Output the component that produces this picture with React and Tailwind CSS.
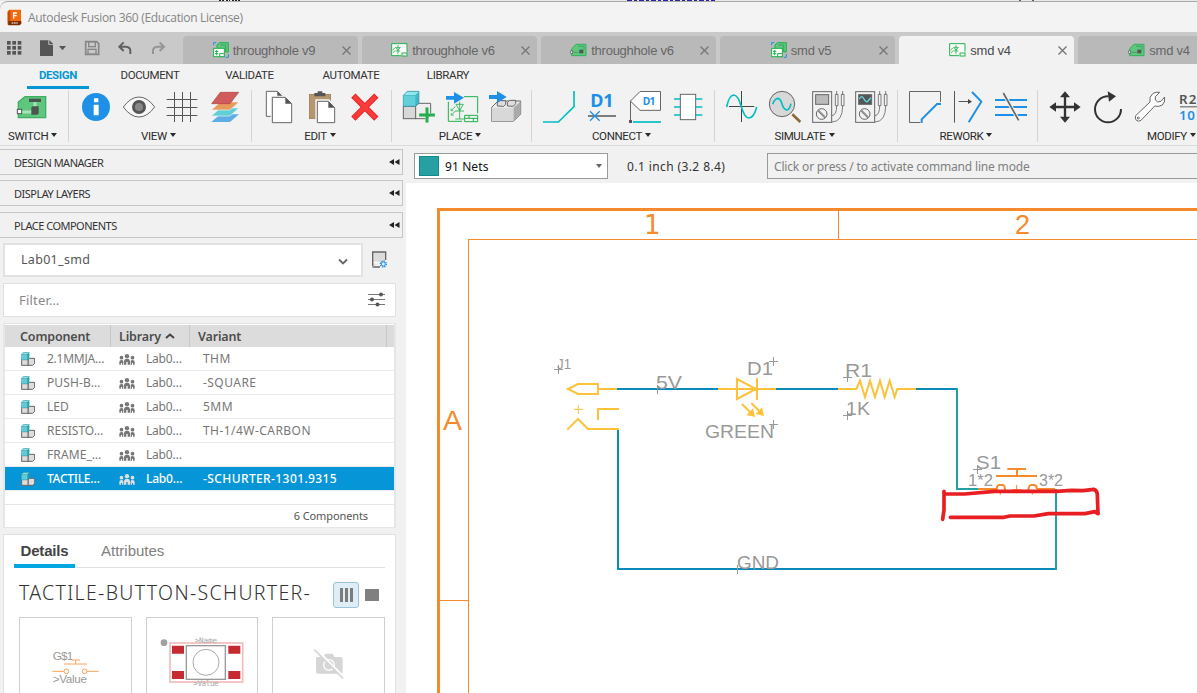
import React from "react";

const GREEN = "#22b14c";
const TEAL = "#00bfc4";
const BLUE = "#1e90e8";
const GREY = "#666";

/* Drawing surface: three drawing units to a pixel. */
function Ic({ x, y, w = 43, h = 36, className = "", children }) {
  return (
    <svg
      width={w}
      height={h}
      viewBox={`${x} ${y} ${w * 3} ${h * 3}`}
      fill="none"
      className={"shrink-0 " + className}
    >
      {children}
    </svg>
  );
}

function Caret({ className = "" }) {
  return (
    <svg width="6" height="4" viewBox="0 0 6 4" className={"shrink-0 " + className}>
      <path d="M0 0H6L3 4Z" fill="currentColor" />
    </svg>
  );
}

/* ---------- document tab icons ---------- */
function BoardIcon() {
  return (
    <svg width="17" height="14" viewBox="0 0 51 42" fill="none" className="shrink-0">
      <path d="M5 38V17L18 4H48V38Z" fill="#5cc77d" stroke="#35b05c" strokeWidth="3" />
      <path d="M8 28H27M24 10H42V20" stroke="#3f8f5a" strokeWidth="2" />
      <rect x="28" y="20" width="12" height="11" fill="#555" />
      <rect x="2" y="24" width="6" height="7" fill="#fff" stroke="#555" strokeWidth="2" />
    </svg>
  );
}
function SchematicIcon() {
  return (
    <svg width="17" height="14" viewBox="0 0 51 42" fill="none" className="shrink-0">
      <path d="M30 38H2V2H48V26" fill="#fff" stroke={GREEN} strokeWidth="3" />
      <path d="M21 6V34M13 13H28L21 22ZM13 24H28M5 22L11 15M6 30L12 23" stroke={GREEN} strokeWidth="2.5" />
      <rect x="33" y="30" width="15" height="9" fill="#fff" stroke={GREEN} strokeWidth="3" />
    </svg>
  );
}
function ProjectIcon() {
  return (
    <svg width="16" height="16" viewBox="0 0 48 48" fill="none" className="shrink-0">
      <path d="M2 10V2H10M38 46H46V36" stroke={BLUE} strokeWidth="3" />
      <path d="M12 20V9L19 2H46V30H38V20Z" fill="#5cc77d" stroke={GREEN} strokeWidth="3" />
      <path d="M22 9H38V18" stroke="#3f9f6a" strokeWidth="3" />
      <rect x="2" y="19" width="32" height="25" fill="#fff" stroke={GREEN} strokeWidth="3" />
      <path d="M11 24V40M6 28H16M6 35H16" stroke={GREEN} strokeWidth="3" />
      <rect x="20" y="35" width="14" height="9" fill="#fff" stroke={GREEN} strokeWidth="3" />
    </svg>
  );
}

const tabs = [
  { t: "throughhole v9", icon: <ProjectIcon /> },
  { t: "throughhole v6", icon: <SchematicIcon /> },
  { t: "throughhole v6", icon: <BoardIcon /> },
  { t: "smd v5", icon: <ProjectIcon /> },
  { t: "smd v4", icon: <SchematicIcon />, active: true },
  { t: "smd v4", icon: <BoardIcon /> },
];

function TitleBar() {
  return (
    <div className="h-8 shrink-0 bg-[#f3f3f3] flex flex-col overflow-hidden">
      <div className="h-px shrink-0 flex overflow-hidden bg-[#e9e9e9]">
        <svg width="1197" height="1" viewBox="0 0 1197 1">
          <path d="M219 0h5M226 0h4M232 0h8" stroke="#222" strokeWidth="2" strokeDasharray="2 1" />
          <path d="M627 0h88" stroke="#2a1fae" strokeWidth="2" strokeDasharray="5 2 3 2" />
          <path d="M1020 0v2M1033 0v2" stroke="#222" strokeWidth="1.4" />
        </svg>
      </div>
      <div className="grow border-t border-[#a9a9a9] rounded-tl-lg flex items-center pl-[7px]">
        <svg width="15" height="17" viewBox="0 0 45 51" className="shrink-0">
          <path d="M6 2H42V42L36 48H2V8Z" fill="#f56a0a" />
          <path d="M2 8L10 2V36L2 44Z" fill="#c94a00" />
          <path d="M4 36H43V44L38 49H4Z" fill="#7a2d00" />
          <path d="M18 10H30V14H22V18H29V22H22V29H18Z" fill="#fff" />
          <path d="M14 42H32" stroke="#e8c8b0" strokeWidth="4" strokeDasharray="5 2" />
        </svg>
        <span className="ml-[6px] pt-[2px] font-['Open_Sans',sans-serif] text-[12px] tracking-[-0.31px] text-[#858585] whitespace-nowrap">
          Autodesk Fusion 360 (Education License)
        </span>
      </div>
    </div>
  );
}

function TabBar() {
  return (
    <div className="h-8 shrink-0 bg-[#c9c9c9] flex items-end overflow-hidden">
      <div className="w-[183px] shrink-0 h-8 flex">
        <Ic x={0} y={96} w={183} h={32}>
          <g fill="#555">
            {[21, 37, 53].map((x) => [123, 138, 153].map((y) => <rect key={x + "-" + y} x={x} y={y} width="11" height="11" />))}
            <path d="M120 121H145V134H159V168H120Z" />
            <path d="M148 120L160 132H148Z" />
            <path d="M177 138H198L187.500 151Z" />
          </g>
          <path d="M257 125H290L296 131V163H257Z" stroke="#868686" strokeWidth="5" />
          <rect x="266" y="125" width="20" height="15" stroke="#868686" strokeWidth="4" />
          <rect x="264" y="148" width="24" height="15" stroke="#868686" strokeWidth="4" />
          <path d="M371 127L358 140L371 153M359 140H378Q391 141 391 152V162" stroke="#606060" strokeWidth="6" />
          <path d="M479 127L492 140L479 153M491 140H472Q459 141 459 152V162" stroke="#959595" strokeWidth="6" />
        </Ic>
      </div>
      <div className="flex gap-1 h-7">
        {tabs.map((tab, i) => (
          <div
            key={i}
            className={
              "w-[175px] shrink-0 rounded-t-[4px] flex items-center relative " +
              (tab.active ? "bg-[#f2f2f2] text-[#4a4a4a]" : "bg-[#b9b9b9] text-[#666]")
            }
          >
            <div className="w-full flex items-center justify-center gap-1 pr-[13px]">
              {tab.icon}
              <span className="font-['Liberation_Sans',sans-serif] text-[13px] leading-4 tracking-[-0.25px] pt-px whitespace-nowrap">{tab.t}</span>
            </div>
            <svg width="9" height="9" viewBox="0 0 9 9" className="absolute right-[7px] top-[10px]">
              <path d="M0.500 0.500L8.500 8.500M8.500 0.500L0.500 8.500" stroke="#777" strokeWidth="1.400" />
            </svg>
          </div>
        ))}
      </div>
    </div>
  );
}

function Group({ label, width, children }) {
  return (
    <div className={"shrink-0 flex flex-col " + width}>
      <div className="h-[36px] flex">{children}</div>
      <div className="h-4 mt-[2px] pr-[9px] flex items-center justify-center gap-[3px] text-[#2b2b2b]">
        <span className="font-[Roboto,sans-serif] text-[11.5px] tracking-[-0.35px] leading-4 pt-px whitespace-nowrap">{label}</span>
        <Caret className="mb-px" />
      </div>
    </div>
  );
}

function Meter({ scope }) {
  const dx = scope ? 129 : 0;
  return (
    <g transform={`translate(${dx} 0)`} stroke={GREY} strokeWidth="3">
      <rect x="818" y="20" width="57" height="92" fill="#f2f2f2" />
      <rect x="827" y="29" width="39" height="29" fill={scope ? "#555" : "#bbb"} />
      {scope && <path d="M829 42Q836 28 843 42T857 46Q861 42 863 38" stroke="#5fe0e0" strokeWidth="4" />}
      <circle cx="845" cy="87" r="16" />
      <path d="M835 77L855 97" strokeWidth="6" />
      <path d="M835 77L855 97" stroke="#ddd" strokeWidth="2" />
      <path d="M890 18V30M908 18V30M886 28H894V62H886ZM904 28H912V62H904ZM890 62Q890 90 876 92M908 62Q908 110 876 111" strokeWidth="2.500" />
    </g>
  );
}

function Ribbon() {
  return (
    <div className="h-[82px] shrink-0 bg-[#f2f2f2] border-b border-[#dcdcdc] flex flex-col overflow-hidden">
      <div className="h-[25px] shrink-0 flex pl-[27px] font-[Roboto,sans-serif] text-[11.5px] tracking-[-0.35px] leading-[23px] text-[#333]">
        <div className="w-[62px] text-center border-b-[3px] border-[#0696d7] font-bold text-[#0696d7]">DESIGN</div>
        <div className="w-[122px] text-center">DOCUMENT</div>
        <div className="w-[77px] text-center">VALIDATE</div>
        <div className="w-[126px] text-center">AUTOMATE</div>
        <div className="w-[68px] text-center">LIBRARY</div>
      </div>
      <div className="h-[56px] shrink-0 flex">
        <div className="w-[68px] shrink-0 pl-[11px] flex flex-col">
          <Ic x={33} y={267}>
            <path d="M55 353V306L75 290H137V353Z" fill="#5cc77d" stroke="#3fae62" strokeWidth="4" />
            <path d="M60 336H100M105 306V325" stroke="#a6e3b8" strokeWidth="9" />
            <rect x="87" y="296" width="36" height="10" fill="#4c5550" />
            <path d="M94 322L98 319H116V340L112 344H94Z" fill="#4c5550" />
            <rect x="52" y="328" width="13" height="13" fill="#fff" stroke="#555" strokeWidth="3" />
          </Ic>
          <div className="h-4 mt-[2px] -ml-[3px] flex items-center gap-[3px] text-[#2b2b2b]">
            <span className="font-[Roboto,sans-serif] text-[11.5px] tracking-[-0.35px] leading-4 pt-px">SWITCH</span>
            <Caret className="mb-px" />
          </div>
        </div>
        <Sep />
        <Group label="VIEW" width="w-[182px] pl-[6px]">
          <Ic x={225} y={267}>
            <circle cx="288" cy="321" r="42" fill={BLUE} />
            <path d="M282 295H295V307H282ZM281 314H296V346H281Z" fill="#fff" />
          </Ic>
          <Ic x={354} y={267}>
            <path d="M370 321Q392 291 417 291T464 321Q442 351 417 351T370 321Z" fill="#f8f8f8" stroke={GREY} strokeWidth="3" />
            <circle cx="417" cy="321" r="21" fill="#555" />
            <circle cx="417" cy="321" r="12" fill="#888" />
          </Ic>
          <Ic x={483} y={267}>
            <path d="M500 298.500H592M500 322.500H592M500 346.500H592M523.500 276V366M547.500 276V366M571.500 276V366" stroke="#555" strokeWidth="3" />
          </Ic>
          <Ic x={612} y={267}>
            <path d="M661 343H717L690 366H634Z" fill="#5eaee5" />
            <path d="M661 324H717L690 348H634Z" fill="#5fd0d8" stroke="#f2f2f2" strokeWidth="2" />
            <path d="M661 306H717L690 330H634Z" fill="#e8995c" stroke="#f2f2f2" strokeWidth="2" />
            <path d="M661 277H716L690 311H635Z" fill="#cf5b5b" stroke="#b04040" strokeWidth="2" />
          </Ic>
        </Group>
        <Sep />
        <Group label="EDIT" width="w-[139px] pl-[6px]">
          <Ic x={774} y={267}>
            <path d="M799 274H832L848 290V349H799Z" fill="#fff" stroke={GREY} strokeWidth="3" />
            <path d="M832 274V290H848Z" fill="#555" />
            <path d="M812 287H858L880 309V368H812Z" fill="#f2f2f2" />
            <path d="M817 292H856L875 311V368H817Z" fill="#fff" stroke={GREY} strokeWidth="3" />
            <path d="M856 292V311H875Z" fill="#555" />
          </Ic>
          <Ic x={903} y={267}>
            <rect x="928" y="283" width="64" height="73" fill="#b5966f" stroke="#94764f" strokeWidth="2" />
            <path d="M943 289V279H953V274H967V279H976V289Z" fill="#555" />
            <path d="M946 298H988L1006 318V372H946Z" fill="#f2f2f2" />
            <path d="M952 304H985L1004 323V368H952Z" fill="#fff" stroke={GREY} strokeWidth="3" />
            <path d="M985 304V323H1004Z" fill="#555" />
          </Ic>
          <Ic x={1032} y={267}>
            <path d="M1060 287L1129 356M1129 287L1060 356" stroke="#e02424" strokeWidth="18" />
            <path d="M1062 289L1127 354M1127 289L1062 354" stroke="#fb3a3a" strokeWidth="13" />
          </Ic>
        </Group>
        <Sep />
        <Group label="PLACE" width="w-[139px] pl-[6px]">
          <Ic x={-6} y={267}>
            <path d="M46 319L57 310H92V345L82 356H46Z" fill="#eee" stroke={GREY} strokeWidth="3" />
            <rect x="10" y="319" width="37" height="37" fill="#d8d8d8" stroke={GREY} strokeWidth="3" />
            <path d="M10 286L22 274H57V308L47 319H10Z" fill="#45b5c4" stroke="#3d9caa" strokeWidth="2" />
            <path d="M12 287H46V317H12Z" fill="#62d0db" />
            <path d="M13 285L22 276H56L46 285Z" fill="#92e6ec" />
            <path d="M76 322H86V340H105V350H86V368H76V350H57V340H76Z" fill="#24ae4f" stroke="#f2f2f2" strokeWidth="1" />
          </Ic>
          <Ic x={123} y={267}>
            <path d="M145 305V364H186M192 290H233V340" stroke={GREEN} strokeWidth="3" />
            <path d="M168 313H190L179 332ZM166 333H192M179 305V357M166 357H192M166 320L154 331M166 333L155 345" stroke={GREEN} strokeWidth="2.500" />
            <path d="M153 325V332H160M154 339V346H161" stroke={GREEN} strokeWidth="2" />
            <path d="M194 346H233V365H194ZM194 355H233M207 346V355M220 355V365" stroke={GREEN} strokeWidth="3" />
            <path d="M138 288H162V276L192 293L162 311V299H138Z" fill={BLUE} />
          </Ic>
          <Ic x={252} y={267}>
            <path d="M275 322L294 303H362V342L340 364H275Z" fill="#eee" stroke={GREY} strokeWidth="3" />
            <path d="M340 323L362 304V342L340 364Z" fill="#aaa" />
            <path d="M275 323H340V364H275Z" fill="#d8d8d8" />
            <path d="M292 318V308L299 302H317V313L311 319ZM322 318V308L329 301H347V311L340 319Z" fill="#ddd" stroke={GREY} strokeWidth="3" />
            <path d="M267 285H291V273L320 291L291 309V297H267Z" fill={BLUE} />
          </Ic>
        </Group>
        <Sep />
        <Group label="CONNECT" width="w-[182px] pl-[6px]">
          <Ic x={414} y={267}>
            <path d="M429 366H475L522 320V273" stroke={TEAL} strokeWidth="5" />
          </Ic>
          <Ic x={543} y={267}>
            <text x="571" y="320" textLength="70" fill={BLUE} fontFamily="Noto Sans, sans-serif" fontWeight="700" fontSize="54">D1</text>
            <path d="M564 348H648" stroke={GREY} strokeWidth="5" />
            <path d="M570 334L599 362M599 334L570 362" stroke={BLUE} strokeWidth="4" />
          </Ic>
          <Ic x={672} y={267}>
            <path d="M720 275H781V330H720L692 303Z" fill="#fff" />
            <path d="M691.500 362V303L720 274.500H781.500V331H720L691 303" stroke={GREY} strokeWidth="3" />
            <rect x="687" y="360" width="9" height="9" fill="#555" />
            <text x="728" y="315" textLength="38" fill={BLUE} fontFamily="Noto Sans, sans-serif" fontWeight="700" fontSize="31">D1</text>
            <path d="M699 366H783" stroke={TEAL} strokeWidth="5" />
          </Ic>
          <Ic x={801} y={267}>
            <path d="M822 297H907M822 321H907M822 345H907" stroke={TEAL} strokeWidth="5" />
            <rect x="841" y="283" width="46" height="76" fill="#fff" stroke={GREY} strokeWidth="3" />
          </Ic>
        </Group>
        <Sep />
        <Group label="SIMULATE" width="w-[182px] pl-[6px]">
          <Ic x={543} y={12}>
            <path d="M604.500 18V111M567 64.500H643" stroke="#444" strokeWidth="3" />
            <path d="M560 66Q567 30 582 30Q594 31 604 65T627 99Q642 98 650 66" stroke={TEAL} strokeWidth="5" />
          </Ic>
          <Ic x={672} y={12}>
            <circle cx="726" cy="57" r="38" fill="#d8d8d8" stroke={GREY} strokeWidth="3" />
            <path d="M698 58Q704 40 714 40Q722 42 726 57T740 75Q749 74 753 56" stroke={TEAL} strokeWidth="5" />
            <path d="M757 88L781 111" stroke="#8a683b" strokeWidth="8" />
          </Ic>
          <Ic x={801} y={12}><Meter /></Ic>
          <Ic x={930} y={12}><Meter scope /></Ic>
        </Group>
        <Sep />
        <Group label="REWORK" width="w-[139px] pl-[6px]">
          <Ic x={321} y={267}>
            <path d="M370 367.500H337.500V274.500H430.500V306" stroke={GREY} strokeWidth="3" />
            <path d="M374 369V358L420 312H432" stroke={BLUE} strokeWidth="6" />
          </Ic>
          <Ic x={450} y={267}>
            <path d="M472.500 273V368M485 304.500H514" stroke="#555" strokeWidth="3" />
            <path d="M513 297L525 305L513 312Z" fill="#444" />
            <path d="M525 276L553 305L515 367" stroke={BLUE} strokeWidth="6" />
          </Ic>
          <Ic x={579} y={267}>
            <path d="M594 300H690M594 321H690M594 345H690" stroke={BLUE} strokeWidth="6" />
            <path d="M619 279L665 361" stroke="#f2f2f2" strokeWidth="11" />
            <path d="M619 279L665 361" stroke={GREY} strokeWidth="5" />
          </Ic>
        </Group>
        <Sep />
        <Group label="MODIFY" width="w-[270px] pl-[6px]">
          <Ic x={741} y={267}>
            <path d="M804 290V352M775 321H835" stroke="#333" strokeWidth="7" />
            <path d="M804 274L789 292H819ZM804 368L789 350H819ZM757 321L777 307V335ZM851 321L831 307V335Z" fill="#333" />
          </Ic>
          <Ic x={870} y={267}>
            <path d="M935 289A39 39 0 1 0 972 327" stroke="#333" strokeWidth="6" />
            <path d="M932 274L957 289L936 305Z" fill="#333" />
          </Ic>
          <Ic x={999} y={267}>
            <path d="M1016 347L1059 306Q1055 291 1068 280Q1078 275 1088 277L1075 290V300L1082 306L1092 304L1103 291Q1105 307 1096 315Q1084 322 1073 318L1032 361Q1025 366 1018 361Q1013 355 1016 347Z" fill="#fff" stroke={GREY} strokeWidth="3" />
            <circle cx="1024" cy="354" r="3" stroke={GREY} strokeWidth="3" />
          </Ic>
          <Ic x={1128} y={267}>
            <text x="1146" y="311" fill="#555" fontFamily="Noto Sans, sans-serif" fontSize="40" textLength="52" fontWeight="600">R2</text>
            <path d="M1149 320.500H1240" stroke="#555" strokeWidth="3" />
            <text x="1146" y="360" fill={BLUE} fontFamily="Noto Sans, sans-serif" fontSize="40" textLength="76" fontWeight="600">10K</text>
          </Ic>
        </Group>
      </div>
    </div>
  );
}

function Sep() {
  return <div className="w-px h-[52px] mt-px bg-[#d4d4d4] shrink-0" />;
}

/* ---------- left side ---------- */
function PanelHeader({ title, className }) {
  return (
    <div className={"h-[26px] shrink-0 border border-l-0 border-[#c6c6c6] flex items-center justify-between pl-[14px] " + className}>
      <span className="font-['Noto_Sans',sans-serif] text-[11px] tracking-[-0.5px] pt-[3px] text-[#333]">{title}</span>
      <svg width="11" height="6" viewBox="0 0 11 6" className="mr-[2px] mb-px">
        <path d="M5 0V6L0 3ZM10.500 0V6L5.500 3Z" fill="#222" />
      </svg>
    </div>
  );
}

function PartIcon() {
  return (
    <svg width="14" height="14" viewBox="0 0 42 42" className="shrink-0">
      <path d="M21 24L26 19H41V34L35 40H21Z" fill="#ddd" stroke="#666" strokeWidth="3" />
      <rect x="2" y="23" width="19" height="17" fill="#ddd" stroke="#666" strokeWidth="3" />
      <path d="M1 7L7 1H25V18L20 24H1Z" fill="#2f98a5" />
      <rect x="2" y="7" width="17" height="16" fill="#62cbd6" />
      <path d="M3 6L8 2H24L19 6Z" fill="#8fe0e7" />
    </svg>
  );
}
function PeopleIcon({ color }) {
  return (
    <svg width="16" height="11" viewBox="0 0 48 33" fill={color} className="shrink-0 mt-px">
      <circle cx="24" cy="6.500" r="6.500" /><circle cx="7.500" cy="11" r="5.500" /><circle cx="40.500" cy="11" r="5.500" />
      <path d="M15 32V21Q16 14 24 14T33 21V32H26V24H22V32ZM1 32V24Q1 18 7.500 18Q12 18 13 21V32H9V27H6V32ZM47 32V24Q47 18 40.500 18Q36 18 35 21V32H39V27H42V32Z" />
    </svg>
  );
}

const parts = [
  ["2.1MMJA…", "THM", "tracking-[-0.25px]"],
  ["PUSH-B…", "-SQUARE", "tracking-[0.1px]"],
  ["LED", "5MM", ""],
  ["RESISTO…", "TH-1/4W-CARBON", "tracking-[0px]"],
  ["FRAME_…", "", "tracking-[0.1px]"],
  ["TACTILE…", "-SCHURTER-1301.9315", "tracking-[-0.3px]"],
];

function LeftPanel() {
  return (
    <div className="w-[403px] shrink-0 flex flex-col pt-[3px]">
      <PanelHeader title="DESIGN MANAGER" className="" />
      <PanelHeader title="DISPLAY LAYERS" className="mt-[5px]" />
      <PanelHeader title="PLACE COMPONENTS" className="mt-[6px]" />
      <div className="flex flex-col pl-[3px] pr-[7px] pt-[5px] grow font-['Noto_Sans',sans-serif]">
        <div className="flex h-[34px] shrink-0 items-center">
          <div className="w-[360px] h-[34px] border-2 border-[#e2e2e2] bg-white flex items-center justify-between pl-4 pr-[13px]">
            <span className="text-[12.5px] text-[#555] tracking-[0.3px] pt-px">Lab01_smd</span>
            <svg width="10" height="7" viewBox="0 0 10 7" fill="none" className="mt-[2px]"><path d="M1 1.500L5 5.500L9 1.500" stroke="#666" strokeWidth="1.800" /></svg>
          </div>
          <Ic x={1110} y={325} w={18} h={20} className="ml-[7px] mb-[2px]">
            <path d="M1118 378Q1118 379 1122 379H1140M1118 377V334H1157V358" stroke="#666" strokeWidth="4" fill="#dcdcdc" />
            <path d="M1122 366H1140" stroke="#fff" strokeWidth="5" />
            <circle cx="1150" cy="370" r="9" stroke={BLUE} strokeWidth="4" strokeDasharray="4 3" />
            <circle cx="1150" cy="370" r="6" fill="#f2f2f2" stroke={BLUE} strokeWidth="3" />
          </Ic>
        </div>
        <div className="mt-[6px] h-[34px] shrink-0 border border-[#e0e0e0] bg-white flex items-center justify-between pl-[15px] pr-[10px]">
          <span className="text-[13px] text-[#888] tracking-[0.2px] pt-px">Filter…</span>
          <svg width="17" height="15" viewBox="0 0 17 15" className="mb-px">
            <path d="M0 2.500H17M0 7.500H17M0 12.500H17" stroke="#777" strokeWidth="1.200" />
            <g fill="#555"><circle cx="13" cy="2.500" r="2" /><circle cx="4" cy="7.500" r="2" /><circle cx="9.500" cy="12.500" r="2" /></g>
          </svg>
        </div>
        <div className="mt-[6px] h-[205px] shrink-0 border-2 border-t border-[#e4e6e8] bg-white flex flex-col pt-px border-b">
          <div className="h-[22px] shrink-0 bg-[#dcdcdc] flex items-center text-[12.5px] font-semibold text-[#4d4d4d] tracking-[-0.15px]">
            <div className="w-[106px] h-full leading-[23px] pl-[15px] border-r border-[#c6c6c6]">Component</div>
            <div className="w-[79px] h-full leading-[23px] pl-[8px] border-r border-[#c6c6c6] flex items-center gap-[4px]">
              <span>Library</span>
              <svg width="10" height="6" viewBox="0 0 10 6" fill="none"><path d="M1 5L5 1.500L9 5" stroke="#444" strokeWidth="2" /></svg>
            </div>
            <div className="w-[197px] h-full leading-[23px] pl-[8px] border-r border-[#c6c6c6]">Variant</div>
          </div>
          {parts.map(([name, variant, track], i) => {
            const sel = i === 5;
            return (
              <div
                key={name}
                className={
                  "h-6 shrink-0 flex items-center pl-4 text-[12px] border-b border-[#e9ebee] " +
                  (sel ? "bg-[#0696d7] text-white font-medium" : "text-[#777]")
                }
              >
                <PartIcon />
                <span className={"ml-3 w-[72px] pt-px whitespace-nowrap " + track}>{name}</span>
                <PeopleIcon color={sel ? "#e0e0e0" : "#777"} />
                <span className="ml-[11px] w-[57px] pt-px tracking-[-0.2px] whitespace-nowrap">Lab0…</span>
                <span className={"whitespace-nowrap pt-px " + (sel ? "tracking-[0.4px]" : "tracking-[0.45px]")}>{variant}</span>
              </div>
            );
          })}
          <div className="h-[14px] shrink-0 border-b border-[#e4e8ec]" />
          <div className="grow flex items-center justify-end pr-[26px] pt-px text-[11px] tracking-[-0.1px] text-[#555]">6 Components</div>
        </div>
        <div className="mt-[6px] h-[180px] shrink-0 border border-[#e0e0e0] bg-white flex flex-col px-[10px]">
          <div className="h-[33px] shrink-0 flex border-b border-[#e0e0e0] font-['Liberation_Sans',sans-serif] text-[15px] leading-[31px]">
            <div className="h-[33px] w-[61px] border-b-4 border-[#00a8e1] text-center font-bold text-[#444] tracking-[-0.2px]">Details</div>
            <div className="ml-[26px] text-[#808080]">Attributes</div>
          </div>
          <div className="mt-[13px] h-[28px] shrink-0 flex items-center pl-[5px]">
            <span className="w-[314px] shrink-0 text-[19.5px] leading-[24px] pb-[4px] font-light tracking-[1.32px] text-[#333] whitespace-nowrap">TACTILE-BUTTON-SCHURTER-</span>
            <div className="size-[26px] shrink-0 border border-[#9cc3d9] bg-[#dfedf6] rounded-[3px] flex items-center justify-center gap-[2px]">
              <div className="w-[3px] h-[14px] bg-[#7c7c7c]" />
              <div className="w-[3px] h-[14px] bg-[#7c7c7c]" />
              <div className="w-[3px] h-[14px] bg-[#7c7c7c]" />
            </div>
            <div className="ml-[6px] w-[14px] h-3 shrink-0 bg-[#808080]" />
          </div>
          <div className="mt-[8px] flex gap-[14px] pl-[5px]">
            <div className="w-[113px] h-[110px] shrink-0 border border-[#cfcfcf]">
              <Ic x={60} y={354} w={111} h={75}>
                <text x="158" y="480" fontSize="35" textLength="62" fill="#999" fontFamily="Liberation Sans, sans-serif">G$1</text>
                <text x="158" y="549" fontSize="35" textLength="103" fill="#999" fontFamily="Liberation Sans, sans-serif">&gt;Value</text>
                <path d="M215 480H240M227 481V491M192 492H261M157 514H192M261 514H296" stroke="#f7a458" strokeWidth="3" />
                <circle cx="199" cy="514" r="7" stroke="#f7a458" strokeWidth="3" />
                <circle cx="254" cy="514" r="7" stroke="#f7a458" strokeWidth="3" />
              </Ic>
            </div>
            <div className="w-[112px] h-[110px] shrink-0 border border-[#cfcfcf]">
              <Ic x={441} y={354} w={110} h={75}>
                <circle cx="492" cy="428" r="10" fill="#a0a0a0" />
                <rect x="510" y="429" width="218" height="117" stroke="#f2bcbc" strokeWidth="5" />
                <path d="M516 437H552V461H516ZM685 437H721V461H685ZM516 513H552V537H516ZM685 513H721V537H685Z" fill="#c82a32" />
                <rect x="559" y="437" width="117" height="101" stroke="#999" strokeWidth="4" />
                <circle cx="618" cy="487" r="39" stroke="#aaa" strokeWidth="3" />
                <text x="584" y="428" fontSize="23" textLength="67" fill="#aaa" fontFamily="DejaVu Sans Mono, monospace">&gt;Name</text>
                <text x="580" y="559" fontSize="23" textLength="76" fill="#aaa" fontFamily="DejaVu Sans Mono, monospace">&gt;Value</text>
              </Ic>
            </div>
            <div className="w-[113px] h-[110px] shrink-0 border border-[#cfcfcf]">
              <Ic x={819} y={354} w={111} h={75}>
                <path d="M952 471H970L976 461H998L1004 471H1022Q1028 471 1028 478V515Q1028 521 1022 521H954Q948 521 948 515V478Q948 471 952 471Z" fill="#d6d6d6" />
                <circle cx="987" cy="495" r="16" stroke="#fff" strokeWidth="4" />
                <path d="M946 446L1032 532" stroke="#fff" strokeWidth="8" />
                <path d="M943 449L1029 535" stroke="#d6d6d6" strokeWidth="5" />
              </Ic>
            </div>
          </div>
        </div>
      </div>
    </div>
  );
}

/* ---------- schematic ---------- */
function Label({ x, y, w, size = 18.5, children }) {
  return (
    <text x={x} y={y} textLength={w} lengthAdjust="spacingAndGlyphs" fontSize={size} fill="#999" fontFamily="Liberation Sans, sans-serif">
      {children}
    </text>
  );
}

function Schematic() {
  return (
    <svg width="791" height="510" viewBox="406 183 791 510" fill="none" className="block bg-white shrink-0">
      <g stroke="#f68a2c" shapeRendering="crispEdges">
        <path d="M438.500 693V209.500H1197" strokeWidth="3" />
        <path d="M468.500 693V239.500H1197M838.500 211V239M440 600.500H468" strokeWidth="1" />
      </g>
      <g fill="#f68a2c" fontFamily="Liberation Sans, sans-serif" fontSize="27">
        <text x="644" y="234" fontFamily="DejaVu Sans, sans-serif" fontSize="26" textLength="15">1</text>
        <text x="1015" y="234">2</text>
        <text x="443" y="430" textLength="19" lengthAdjust="spacingAndGlyphs">A</text>
      </g>
      <g stroke="#0a8ab8" strokeWidth="2" shapeRendering="crispEdges">
        <path d="M617 389H718M776 389H838M915 389H957M618 428V569H1057" />
        <path d="M957 388V489H978M1056 489V570" stroke="#26a0a0" />
      </g>
      <g stroke="#999" strokeWidth="1" shapeRendering="crispEdges">
        <path d="M554 369.500H563M558.500 365V374M657.500 385V394M769 361.500H778M773.500 357V366M769 424.500H778M773.500 420V429M843 377.500H852M847.500 373V382M843 415.500H852M847.500 411V420M973 469.500H982M977.500 465V474M737.500 565V574" />
      </g>
      <g transform="translate(540 340) scale(0.33333)" stroke="#fdc23a" strokeWidth="6">
        <path d="M84 147L114 132H174V162H114ZM174 147H231M534 147H650M650 147H708M591 117V177L648 147ZM651 114V180" />
        <path d="M894 147H949L960 122L975 171L990 122L1005 171L1020 122L1034 171L1049 122L1064 171L1072 147H1128" />
        <path d="M237 207H174V240M82 269L114 237L144 267H237" />
        <path d="M102 208H129M115 195V222" strokeWidth="3" />
        <path d="M606 192L640 226M634 189L667 222" />
        <path d="M645 231L619 225L639 205ZM672 228L647 222L666 202Z" fill="#fdc23a" stroke="none" />
      </g>
      <Label x={557} y={369} w={14} size={15}>J1</Label>
      <Label x={656} y={389} w={26}>5V</Label>
      <Label x={747} y={375} w={26}>D1</Label>
      <Label x={705} y={438} w={69}>GREEN</Label>
      <Label x={845} y={377} w={27}>R1</Label>
      <Label x={846} y={415} w={24}>1K</Label>
      <Label x={976} y={469} w={25}>S1</Label>
      <Label x={968} y={486} w={25} size={17}>1*2</Label>
      <Label x={1039} y={486} w={24} size={17}>3*2</Label>
      <Label x={737} y={569} w={42}>GND</Label>
      <g transform="translate(920 430) scale(0.33333)">
        <path d="M262 117H318M291 117V137M228 138H351M174 177H230M351 177H405M230 182Q230 165 238 165H248Q255 166 255 182M325 182Q326 165 334 165H343Q351 166 350 177" stroke="#f68a2c" strokeWidth="6" />
        <path d="M290 165V190M277 179H304M241 180V194M337 180V194" stroke="#f68a2c" strokeWidth="3" />
        <path d="M68 268L72 240V184M74 192H134L224 184H410L455 181L490 182L521 178Q533 182 532 197L534 250" stroke="#e81e22" strokeWidth="11" strokeLinecap="round" strokeLinejoin="round" />
        <path d="M91 262H252L270 258H342L385 251H495L524 245L534 251" stroke="#e81e22" strokeWidth="11" strokeLinecap="round" strokeLinejoin="round" />
      </g>
    </svg>
  );
}

export default function App() {
  return (
    <div className="w-[1197px] h-[693px] overflow-hidden bg-[#f1f1f1] flex flex-col">
      <TitleBar />
      <TabBar />
      <Ribbon />
      <div className="grow min-h-0 flex overflow-hidden">
        <LeftPanel />
        <div className="ml-[3px] flex flex-col w-[791px] shrink-0 font-['Noto_Sans',sans-serif]">
          <div className="h-[37px] shrink-0 flex items-center pt-[3px] pl-2">
            <div className="w-[194px] h-[26px] shrink-0 border border-[#999] bg-white flex items-center pl-1 pr-[5px]">
              <div className="size-5 bg-[#26a0a0] border border-[#128a8c]" />
              <span className="ml-[6px] grow text-[12px] tracking-[0.1px] text-[#111] pt-px">91 Nets</span>
              <Caret className="text-[#666]" />
            </div>
            <span className="ml-[19px] w-[140px] shrink-0 text-[12px] tracking-[0.4px] text-[#333] pt-px whitespace-nowrap">0.1 inch (3.2 8.4)</span>
            <div className="grow h-[26px] border border-r-0 border-[#999] flex items-center pl-[6px] pt-px text-[12px] tracking-[-0.17px] text-[#808080] whitespace-nowrap">
              Click or press / to activate command line mode
            </div>
          </div>
          <Schematic />
        </div>
      </div>
    </div>
  );
}
